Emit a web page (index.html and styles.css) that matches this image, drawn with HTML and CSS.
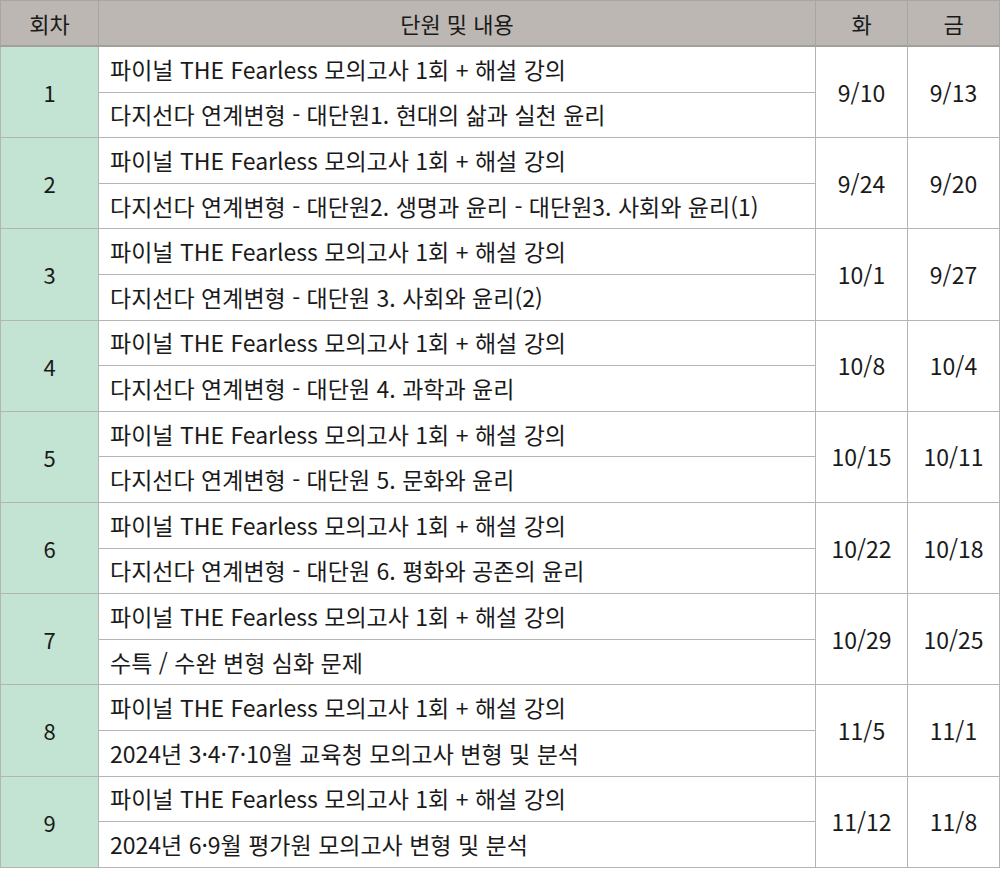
FILE: index.html
```html
<!DOCTYPE html>
<html lang="ko">
<head>
<meta charset="utf-8">
<link rel="stylesheet" href="styles.css">
</head>
<body>
<table class="sched">
  <colgroup>
    <col class="c-no"><col class="c-content"><col class="c-day"><col class="c-day">
  </colgroup>
  <thead>
    <tr><th>회차</th><th>단원 및 내용</th><th>화</th><th>금</th></tr>
  </thead>
  <tbody>
    <tr><td class="no" rowspan="2">1</td><td class="txt">파이널 THE Fearless 모의고사 1회 + 해설 강의</td><td class="d" rowspan="2">9/10</td><td class="d" rowspan="2">9/13</td></tr>
    <tr><td class="txt">다지선다 연계변형 - 대단원1. 현대의 삶과 실천 윤리</td></tr>
    <tr><td class="no" rowspan="2">2</td><td class="txt">파이널 THE Fearless 모의고사 1회 + 해설 강의</td><td class="d" rowspan="2">9/24</td><td class="d" rowspan="2">9/20</td></tr>
    <tr><td class="txt">다지선다 연계변형 - 대단원2. 생명과 윤리 - 대단원3. 사회와 윤리(1)</td></tr>
    <tr><td class="no" rowspan="2">3</td><td class="txt">파이널 THE Fearless 모의고사 1회 + 해설 강의</td><td class="d" rowspan="2">10/1</td><td class="d" rowspan="2">9/27</td></tr>
    <tr><td class="txt">다지선다 연계변형 - 대단원 3. 사회와 윤리(2)</td></tr>
    <tr><td class="no" rowspan="2">4</td><td class="txt">파이널 THE Fearless 모의고사 1회 + 해설 강의</td><td class="d" rowspan="2">10/8</td><td class="d" rowspan="2">10/4</td></tr>
    <tr><td class="txt">다지선다 연계변형 - 대단원 4. 과학과 윤리</td></tr>
    <tr><td class="no" rowspan="2">5</td><td class="txt">파이널 THE Fearless 모의고사 1회 + 해설 강의</td><td class="d" rowspan="2">10/15</td><td class="d" rowspan="2">10/11</td></tr>
    <tr><td class="txt">다지선다 연계변형 - 대단원 5. 문화와 윤리</td></tr>
    <tr><td class="no" rowspan="2">6</td><td class="txt">파이널 THE Fearless 모의고사 1회 + 해설 강의</td><td class="d" rowspan="2">10/22</td><td class="d" rowspan="2">10/18</td></tr>
    <tr><td class="txt">다지선다 연계변형 - 대단원 6. 평화와 공존의 윤리</td></tr>
    <tr><td class="no" rowspan="2">7</td><td class="txt">파이널 THE Fearless 모의고사 1회 + 해설 강의</td><td class="d" rowspan="2">10/29</td><td class="d" rowspan="2">10/25</td></tr>
    <tr><td class="txt">수특 / 수완 변형 심화 문제</td></tr>
    <tr><td class="no" rowspan="2">8</td><td class="txt">파이널 THE Fearless 모의고사 1회 + 해설 강의</td><td class="d" rowspan="2">11/5</td><td class="d" rowspan="2">11/1</td></tr>
    <tr><td class="txt">2024년 3·4·7·10월 교육청 모의고사 변형 및 분석</td></tr>
    <tr><td class="no" rowspan="2">9</td><td class="txt">파이널 THE Fearless 모의고사 1회 + 해설 강의</td><td class="d" rowspan="2">11/12</td><td class="d" rowspan="2">11/8</td></tr>
    <tr><td class="txt">2024년 6·9월 평가원 모의고사 변형 및 분석</td></tr>
  </tbody>
</table>
</body>
</html>
```

FILE: styles.css
```css
html, body {
  margin: 0;
  padding: 0;
  background: #ffffff;
}
body {
  font-family: "Noto Sans CJK KR", "Noto Sans", sans-serif;
  color: #1a1a1a;
}
.sched {
  border-collapse: collapse;
  table-layout: fixed;
  width: 999px;
  font-size: 23px;
}
.c-no { width: 98px; }
.c-content { width: 717px; }
.c-day { width: 92px; }
.sched th, .sched td {
  border: 1px solid #b4b4b4;
  padding: 0;
  line-height: 1;
}
.sched th {
  background: #bcb7b2;
  font-weight: 400;
  font-size: 22px;
  height: 44px;
  text-align: center;
  border-color: #a8a6a3;
  border-bottom: 2px solid #a2a09d;
}
.sched td {
  height: 44.6px;
}
.sched td.no {
  background: #c3e4d2;
  text-align: center;
  font-size: 22px;
}
.sched td.txt {
  padding-left: 11px;
  white-space: nowrap;
}
.sched td.d {
  text-align: center;
}
```
